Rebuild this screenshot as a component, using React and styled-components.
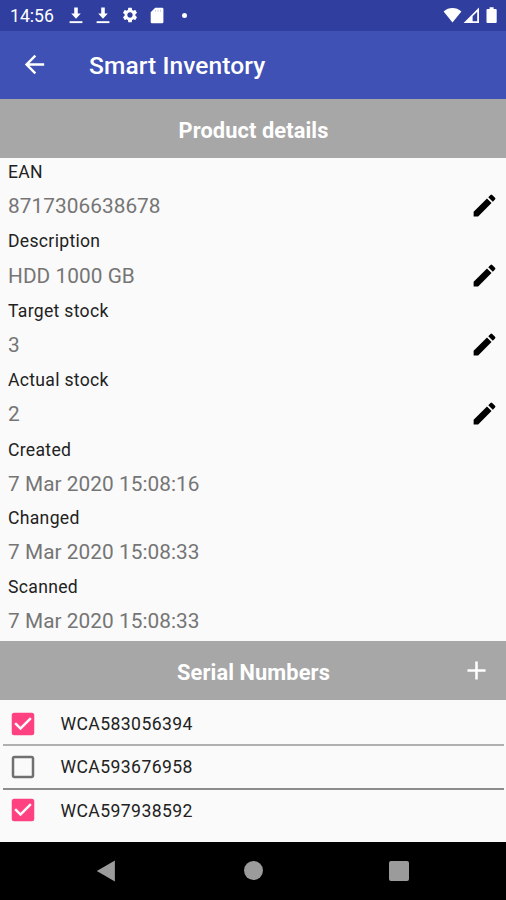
import React from 'react'
import styled, { createGlobalStyle } from 'styled-components'
import { MdAdd, MdArrowBack, MdCheckBox, MdCheckBoxOutlineBlank, MdEdit, MdSettings } from "react-icons/md";

const fields = [
  { label: 'EAN', value: '8717306638678', editable: true },
  { label: 'Description', value: 'HDD 1000 GB', editable: true },
  { label: 'Target stock', value: '3', editable: true },
  { label: 'Actual stock', value: '2', editable: true },
  { label: 'Created', value: '7 Mar 2020 15:08:16' },
  { label: 'Changed', value: '7 Mar 2020 15:08:33' },
  { label: 'Scanned', value: '7 Mar 2020 15:08:33' },
]

const serials = [
  { number: 'WCA583056394', checked: true, line: '#b0b0b0' },
  { number: 'WCA593676958', checked: false, line: '#8c8c8c' },
  { number: 'WCA597938592', checked: true, line: 'transparent' },
]

const DownloadIcon = () => (
  <svg width="14" height="17" viewBox="0 0 14 17" fill="#fff">
    <path d="M5.2 0.500h3.600v6h3L7 11.800 2.200 6.500h3z" />
    <path d="M0.600 14.200h12.800v1.900H0.600z" />
  </svg>
)

const CardIcon = () => (
  <svg width="14" height="17" viewBox="0 0 14 17">
    <path d="M5.200 0.800h6.900a1.300 1.300 0 0 1 1.300 1.300v12.800a1.300 1.300 0 0 1-1.300 1.300H2a1.300 1.300 0 0 1-1.300-1.300V5.300z" fill="#fff" />
    <path d="M5.500 2.800v2M8 2.800v2M10.500 2.800v2" stroke="#c9ceec" strokeWidth="1" />
  </svg>
)

const SignalIcons = () => (
  <svg width="56" height="19" viewBox="0 0 56 19" fill="#fff">
    <path d="M0.600 5.400C5.800 0.900 13.200 0.900 18.400 5.400L9.500 16.500z" />
    <path fillRule="evenodd" d="M20.600 17L36 1.600V17zM29.600 10.200v5h4.600V5.800z" />
    <path d="M46.600 1.200h4v1.700h2.100a1 1 0 0 1 1 1V16a1 1 0 0 1-1 1h-8.200a1 1 0 0 1-1-1V3.900a1 1 0 0 1 1-1h2.100z" />
  </svg>
)

const App = () => {
  return (
    <Screen>
      <GlobalStyle />
      <StatusBar>
        <Clock>14:56</Clock>
        <Notifications>
          <DownloadIcon />
          <DownloadIcon />
          <MdSettings size={18} />
          <CardIcon />
          <Dot />
        </Notifications>
        <SignalIcons />
      </StatusBar>

      <AppBar>
        <MdArrowBack size={29} />
        <AppTitle>Smart Inventory</AppTitle>
      </AppBar>

      <SectionHeader>
        <SectionTitle>Product details</SectionTitle>
      </SectionHeader>
      <Details>
        {fields.map(({ label, value, editable }) => (
          <Field key={label} $editable={editable}>
            <Label>{label}</Label>
            <ValueRow>
              <Value>{value}</Value>
              {editable && <MdEdit size={29} />}
            </ValueRow>
          </Field>
        ))}
      </Details>

      <SectionHeader>
        <SectionTitle>Serial Numbers</SectionTitle>
        <AddButton aria-label="Add serial number">
          <MdAdd size={31} />
        </AddButton>
      </SectionHeader>
      <SerialList>
        {serials.map(({ number, checked, line }) => (
          <SerialRow key={number} $checked={checked} $line={line}>
            {checked ? <MdCheckBox size={30} /> : <MdCheckBoxOutlineBlank size={30} />}
            <SerialNumber>{number}</SerialNumber>
          </SerialRow>
        ))}
      </SerialList>

      <NavBar>
        <svg width="20" height="22" viewBox="0 0 20 22"><path d="M0.800 11L18.900 0.600v20.800z" fill="#9b9b9b" /></svg>
        <HomeKey />
        <RecentsKey />
      </NavBar>
    </Screen>
  )
}

export default App

const GlobalStyle = createGlobalStyle`
  * {
    box-sizing: border-box;
    margin: 0;
    padding: 0;
  }

  body {
    font-family: Roboto, "Liberation Sans", sans-serif;
    background-color: #fafafa;
  }

  svg {
    display: block;
    flex-shrink: 0;
  }
`

const Screen = styled.div`
  width: 506px;
  height: 900px;
  display: flex;
  flex-direction: column;
  background-color: #fafafa;
  overflow: hidden;
`

const StatusBar = styled.div`
  height: 30.5px;
  flex-shrink: 0;
  padding: 0 7px 0 10px;
  display: flex;
  align-items: center;
  background-color: #303f9f;
  color: #fff;
`

const Clock = styled.span`
  width: 59px;
  font-size: 17.6px;
  line-height: 20px;
  padding-top: 2px;
`

const Notifications = styled.div`
  flex: 1;
  display: flex;
  align-items: center;
  gap: 13px;

  svg:nth-child(3) {
    margin: 0 -2px;
  }
`

const Dot = styled.span`
  width: 5px;
  height: 5px;
  margin-left: 5px;
  border-radius: 50%;
  background-color: #fff;
`

const AppBar = styled.div`
  height: 68.5px;
  flex-shrink: 0;
  padding: 0 20px;
  display: flex;
  align-items: center;
  gap: 40px;
  background-color: #3f51b5;
  color: #fff;
`

const AppTitle = styled.h1`
  padding-top: 2px;
  font-size: 24.5px;
  font-weight: 500;
  line-height: 30px;
  letter-spacing: 0.1px;
`

const SectionHeader = styled.div`
  height: 59px;
  flex-shrink: 0;
  display: grid;
  grid-template-columns: 60px 1fr 60px;
  align-items: center;
  background-color: #a7a7a7;
  color: #fff;
`

const SectionTitle = styled.h2`
  grid-column: 2;
  padding: 4px 0 0 1px;
  font-size: 21.8px;
  font-weight: 700;
  line-height: 28px;
  letter-spacing: 0.1px;
  text-align: center;
`

const AddButton = styled.button`
  display: flex;
  justify-content: center;
  border: none;
  background: none;
  color: #fff;
`

const Details = styled.div`
  height: 483px;
  flex-shrink: 0;
`

const Field = styled.div`
  height: ${({ $editable }) => ($editable ? '69.4px' : '68.5px')};
  padding: 3px 7px 0 8px;
`

const Label = styled.p`
  font-size: 17.6px;
  line-height: 22px;
  letter-spacing: 0.3px;
  color: #222;
`

const ValueRow = styled.div`
  height: 45.5px;
  display: flex;
  align-items: center;
  justify-content: space-between;
  color: #000;
`

const Value = styled.p`
  padding-top: 1px;
  font-size: 20.8px;
  line-height: 26px;
  letter-spacing: 0.05px;
  color: #757575;
`

const SerialList = styled.div`
  flex: 1;
  padding: 3px 2px 0 3px;
`

const SerialRow = styled.div`
  height: 43.3px;
  padding-left: 4.5px;
  display: flex;
  align-items: center;
  gap: 23px;
  border-bottom: 2px solid ${({ $line }) => $line};
  color: ${({ $checked }) => ($checked ? '#ff4081' : '#707070')};
`

const SerialNumber = styled.span`
  padding-top: 1px;
  font-size: 17.6px;
  line-height: 22px;
  letter-spacing: 0.4px;
  color: #222;
`

const NavBar = styled.div`
  height: 58.5px;
  flex-shrink: 0;
  padding: 0 97px 0 96px;
  display: flex;
  align-items: center;
  justify-content: space-between;
  background-color: #000;
`

const HomeKey = styled.span`
  width: 19px;
  height: 19px;
  margin-left: 2px;
  border-radius: 50%;
  background-color: #9b9b9b;
`

const RecentsKey = styled.span`
  width: 20px;
  height: 20px;
  border-radius: 2px;
  background-color: #9b9b9b;
`
